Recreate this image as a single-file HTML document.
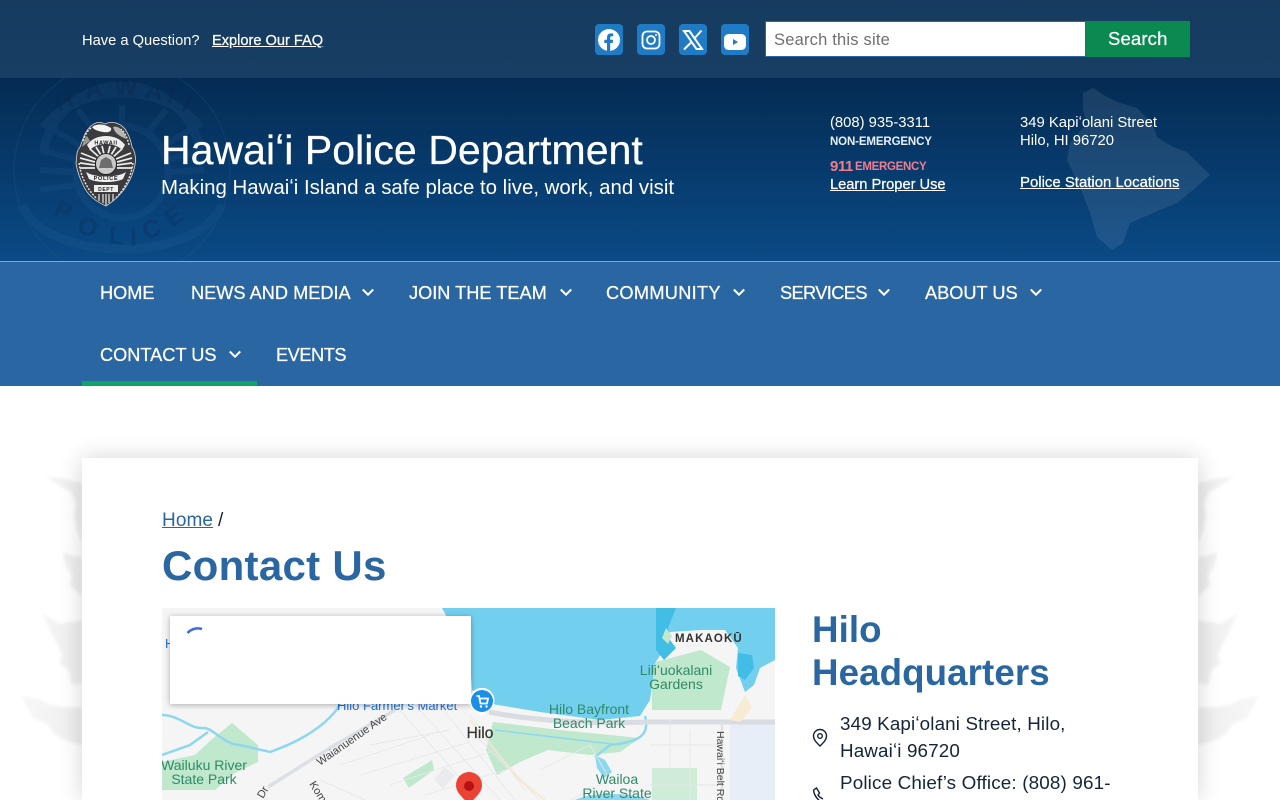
<!DOCTYPE html>
<html lang="en">
<head>
<meta charset="utf-8">
<title>Contact Us | Hawaiʻi Police Department</title>
<style>
html,body{margin:0;padding:0;width:1280px;height:800px;overflow:hidden;background:#fff;font-family:"Liberation Sans",sans-serif}
#page{position:relative;width:1280px;height:800px;overflow:hidden;background:#fff}
.a{position:absolute;white-space:nowrap;line-height:1}
svg{position:absolute;display:block}
#top{position:absolute;left:0;top:0;width:1280px;height:78px;background:linear-gradient(#163b5f,#173e64)}
#head{position:absolute;left:0;top:78px;width:1280px;height:183px;background:linear-gradient(#042b53,#0a4a86);overflow:hidden}
#nav{position:absolute;left:0;top:261px;width:1280px;height:125px;background:#2a66a1;border-top:1px solid #7fa8cf;box-sizing:border-box}
#u{position:absolute;left:82px;top:381px;width:175px;height:5px;background:#0ba568}
#card{position:absolute;left:82px;top:458px;width:1116px;height:342px;background:#fff;box-shadow:0 0 22px rgba(0,0,0,.17)}
.w{color:#fff}
.m{-webkit-text-stroke:.25px currentColor}
.n{color:#fff;font-size:18.2px;-webkit-text-stroke:.25px #fff}
a{color:inherit}
.s{position:absolute;top:24px;width:28px;height:31px;border-radius:4px;background:#1f7cc4}
.s svg{left:0;top:0}
.t{fill:#2f8a68;font-size:14px;font-family:"Liberation Sans",sans-serif}
</style>
</head>
<body>
<div id="page">

<svg style="left:0;top:450px" width="1280" height="350" viewBox="0 450 1280 350">
  <defs>
    <filter id="bl"><feGaussianBlur stdDeviation="1.5"/></filter>
    <linearGradient id="fg" gradientUnits="userSpaceOnUse" x1="20" y1="0" x2="82" y2="0"><stop offset="0" stop-color="#f8f8f8"/><stop offset="1" stop-color="#eeeeee"/></linearGradient>
  </defs>
  <g fill="url(#fg)" filter="url(#bl)">
    <path d="M45 477L63 478L82 483V543L77 532L74 515L76 505L72 493Z"/>
    <path d="M62 552L74 556L82 557V597L70 585L72 575L66 566Z"/>
    <path d="M42 613L60 624L82 620V683L72 685L68 670L60 664L62 654L56 642Z"/>
    <path d="M20 695L40 700L50 705L70 708L82 707V745L70 742L55 735L48 725L33 718Z"/>
    <g transform="translate(1280,0) scale(-1,1)">
      <path d="M45 477L63 478L82 483V543L77 532L74 515L76 505L72 493Z"/>
      <path d="M62 552L74 556L82 557V597L70 585L72 575L66 566Z"/>
      <path d="M42 613L60 624L82 620V683L72 685L68 670L60 664L62 654L56 642Z"/>
      <path d="M20 695L40 700L50 705L70 708L82 707V745L70 742L55 735L48 725L33 718Z"/>
    </g>
  </g>
</svg>

<div id="top"></div>
<span class="a w" style="left:82px;top:34px;font-size:14.7px">Have a Question?</span>
<a class="a w m" href="#" style="left:212px;top:34px;font-size:14.6px">Explore Our FAQ</a>

<div class="s" style="left:595px"><svg width="28" height="31" viewBox="0 0 28 31"><circle cx="14" cy="16" r="11" fill="#fff"/><path d="M12 27V19H9.300V15.800H12V13.500C12 10.800 13.600 9.400 16 9.400C17.100 9.400 18.200 9.600 18.200 9.600V12.300H16.900C15.600 12.300 15.200 13.100 15.200 13.900V15.800H18.100L17.600 19H15.200V27Z" fill="#1f7cc4"/></svg></div>
<div class="s" style="left:637px"><svg width="28" height="31" viewBox="0 0 28 31"><rect x="5.500" y="7.500" width="17" height="17" rx="4.500" fill="none" stroke="#fff" stroke-width="1.800"/><circle cx="14" cy="16" r="4" fill="none" stroke="#fff" stroke-width="1.800"/><circle cx="19" cy="11" r="1" fill="#fff"/></svg></div>
<div class="s" style="left:679px"><svg width="28" height="31" viewBox="0 0 28 31"><path d="M5 7H10.500L23 25H17.500Z" fill="none" stroke="#fff" stroke-width="2"/><path d="M22.500 6.500L15 15M13 17.500L5 25.500" fill="none" stroke="#fff" stroke-width="2"/></svg></div>
<div class="s" style="left:721px"><svg width="28" height="31" viewBox="0 0 28 31"><rect x="3" y="10" width="22" height="16" rx="4.500" fill="#fff"/><path d="M12 15V21L17 18Z" fill="#1f7cc4"/></svg></div>

<div style="position:absolute;left:765px;top:21px;width:321px;height:36px;background:#fff;border:1px solid #2a66a1;box-sizing:border-box"></div>
<span class="a" style="left:774px;top:32px;font-size:16.500px;color:#6f6f6f;letter-spacing:.2px">Search this site</span>
<div style="position:absolute;left:1086px;top:21px;width:104px;height:36px;background:#0a8a50"></div>
<span class="a w m" style="left:1108px;top:30px;font-size:18.500px;letter-spacing:.15px">Search</span>

<div id="head">
  <svg style="left:0;top:0" width="1280" height="183" viewBox="0 78 1280 183">
    <g fill="none" stroke="#3a6fa5" opacity=".13">
      <circle cx="122" cy="170" r="108" stroke-width="1.500"/>
      <path d="M44 148A80 80 0 0 1 200 148M44 128A86 60 0 0 1 200 128M22 205A102 55 0 0 0 222 205" stroke-width="9"/>
      <circle cx="122" cy="172" r="46" stroke-width="7"/>
      <path d="M40 150L78 160M40 170L75 172M40 190L75 185M50 128L85 148M78 110L98 135M122 105V130M166 110L146 135M194 128L159 148M204 150L166 160M204 170L169 172M204 190L169 185" stroke-width="6"/>
    </g>
    <g font-family="Liberation Sans,sans-serif" font-weight="bold" font-size="25" fill="#082a50" opacity=".45">
      <text x="58" y="112" transform="rotate(-20 58 112)">H</text>
      <text x="86" y="99" transform="rotate(-10 86 99)">A</text>
      <text x="114" y="95">W</text>
      <text x="144" y="98" transform="rotate(8 144 98)">A</text>
      <text x="166" y="102" transform="rotate(18 166 102)">I</text>
      <text x="180" y="110" transform="rotate(28 180 110)">I</text>
    </g>
    <g font-family="Liberation Sans,sans-serif" font-weight="bold" font-size="25" fill="#0a3463" opacity=".45">
      <text x="52" y="214" transform="rotate(28 52 214)">P</text>
      <text x="76" y="232" transform="rotate(18 76 232)">O</text>
      <text x="108" y="243" transform="rotate(6 108 243)">L</text>
      <text x="130" y="246">I</text>
      <text x="146" y="240" transform="rotate(-20 146 240)">C</text>
      <text x="172" y="228" transform="rotate(-35 172 228)">E</text>
    </g>
    <path d="M1083 93L1093 88L1107 97L1120 103L1137 108L1152 123L1157 137L1173 147L1187 152L1210 175L1193 190L1177 203L1153 213L1130 223L1123 243L1112 250L1097 237L1090 213L1080 187L1067 160L1070 143L1087 123L1083 110Z" fill="#fff" opacity=".085"/>
  </svg>
</div>

<svg style="left:75px;top:121px" width="62" height="86" viewBox="0 0 62 86">
  <path d="M31 85C24 82 14 76 9 66C5 58 2 50 1 42C2 36 1 30 5 26C8 18 10 10 16 5C22 0 26 1 30 3C36 0 44 1 50 8C54 14 56 20 57 26C61 32 61 38 60 44C58 54 54 62 48 70C42 77 36 82 31 85Z" fill="#3c3c3e" stroke="#d5d7da" stroke-width=".8"/>
  <path d="M17 6C22 2 30 3 36 7C37 10 34 12 28 11C23 10 19 9 17 6Z" fill="#f4f4f4"/>
  <path d="M38 6C44 4 50 11 51 18C45 15 40 13 38 6Z" fill="#b5b5b5"/>
  <path d="M12 15C9 18 8 22 7 26L15 20Z" fill="#999"/>
  <path d="M12 24C20 12 42 12 50 24L47 29C40 21 22 21 15 29Z" fill="#eee"/>
  <text x="31" y="23.500" font-size="5.500" font-weight="bold" text-anchor="middle" fill="#222" letter-spacing=".6">HAWAII</text>
  <g stroke="#ececec" stroke-width="1.700">
    <path d="M6 32L21 38M5 37L20 41M5 42L20 44M5 47L20 47M56 32L41 38M57 37L42 41M57 42L42 44M57 47L42 47M15 28L24 36M47 28L38 36M21 26L26 34M41 26L36 34M27 25L29 33M35 25L33 33"/>
  </g>
  <circle cx="31" cy="43" r="10.500" fill="#c9c9c9" stroke="#222" stroke-width="1"/>
  <path d="M24 47H38L36 39L31 36L26 39Z" fill="#6c6c6c"/>
  <path d="M11 51C20 57 42 57 51 51L48 58C40 62 22 62 14 58Z" fill="#eee"/>
  <text x="31" y="59" font-size="5.500" font-weight="bold" text-anchor="middle" fill="#222" letter-spacing=".7">POLICE</text>
  <rect x="19" y="64" width="24" height="7" fill="#eee"/>
  <text x="31" y="69.800" font-size="5" font-weight="bold" text-anchor="middle" fill="#222" letter-spacing=".6">DEPT</text>
  <g stroke="#ddd" stroke-width="1.300"><path d="M24 73V80M28 73V82M31 73V84M34 73V82M38 73V80"/></g>
  <g fill="none" stroke="#e2e2e2" stroke-width="1.500" stroke-dasharray="2 1.400"><path d="M4 42C6 56 12 68 22 78"/><path d="M58 42C56 56 50 68 40 78"/><path d="M8 20C10 14 12 10 16 7"/><path d="M54 24C52 16 50 12 46 8"/></g>
</svg>

<span class="a w m" style="left:161px;top:130px;font-size:41px;letter-spacing:.04px">Hawaiʻi Police Department</span>
<span class="a w" style="left:161px;top:178px;font-size:20.430px">Making Hawaiʻi Island a safe place to live, work, and visit</span>

<span class="a w" style="left:830px;top:116px;font-size:14.800px">(808) 935-3311</span>
<span class="a" style="left:830px;top:137px;font-size:11.500px;font-weight:bold;color:#e6f0fa;letter-spacing:-.13px">NON-EMERGENCY</span>
<span class="a" style="left:830px;top:159px;font-size:15px;font-weight:bold;color:#ef7e8e;letter-spacing:-.4px">911</span>
<span class="a" style="left:855px;top:162px;font-size:11.500px;font-weight:bold;color:#ef7e8e;letter-spacing:-.3px">EMERGENCY</span>
<a class="a w m" href="#" style="left:830px;top:178px;font-size:14.650px">Learn Proper Use</a>

<span class="a w" style="left:1020px;top:116px;font-size:14.850px">349 Kapiʻolani Street</span>
<span class="a w" style="left:1020px;top:134px;font-size:14.850px">Hilo, HI 96720</span>
<a class="a w m" href="#" style="left:1020px;top:176px;font-size:14.950px">Police Station Locations</a>

<div id="nav"></div>
<span class="a n" style="left:100px;top:284px">HOME</span>
<span class="a n" style="left:191px;top:284px">NEWS AND MEDIA</span>
<span class="a n" style="left:409px;top:284px">JOIN THE TEAM</span>
<span class="a n" style="left:606px;top:284px;letter-spacing:.3px">COMMUNITY</span>
<span class="a n" style="left:780px;top:284px;letter-spacing:-.6px">SERVICES</span>
<span class="a n" style="left:925px;top:284px">ABOUT US</span>
<span class="a n" style="left:100px;top:346px">CONTACT US</span>
<span class="a n" style="left:276px;top:346px;letter-spacing:-.45px">EVENTS</span>
<svg style="left:0;top:261px" width="1280" height="125" viewBox="0 261 1280 125" fill="none" stroke="#fff" stroke-width="2.100">
  <path d="M362.800 289.500L368 294.700L373.200 289.500M560.800 289.500L566 294.700L571.200 289.500M733.800 289.500L739 294.700L744.200 289.500M878.800 289.500L884 294.700L889.200 289.500M1030.800 289.500L1036 294.700L1041.200 289.500M229.800 351.500L235 356.700L240.200 351.500"/>
</svg>
<div id="u"></div>

<div id="card"></div>
<a class="a" href="#" style="left:162px;top:511px;font-size:19px;color:#2a66a1;letter-spacing:.1px">Home</a>
<span class="a" style="left:218px;top:511px;font-size:19px;color:#13233a">/</span>
<h1 class="a" style="margin:0;left:162px;top:545px;font-size:42px;font-weight:bold;color:#2a66a1;letter-spacing:.3px">Contact Us</h1>

<svg style="left:162px;top:608px" width="613" height="192" viewBox="162 608 613 192">
  <rect x="162" y="608" width="613" height="192" fill="#f5f5f5"/>
  <g fill="#bfe8cc">
    <path d="M211 740L232 723L258 745L258 762L235 773L215 790L162 790V762L195 755Z"/>
    <path d="M493 722L560 730L640 738L620 752L590 755L548 750L520 762L497 775L486 750Z"/>
    <path d="M652 663L701 650L730 667L721 710L652 710Z"/>
    <path d="M652 768L697 768V800H652Z" opacity=".7"/>
    <path d="M403 778L432 760L434 770L409 788Z"/>
  </g>
  <path d="M730 720H775V800H730Z" fill="#e8eef7"/>
  <path d="M442 608H775V660L760 668L754 685L745 692L736 668L738 648L725 630L700 630L670 632L664 650L655 663L650 700L640 716L600 720L540 712L492 704L472 690L470 660Z" fill="#72d0ee"/>
  <path d="M656 608H676L668 628L670 640L676 648L664 660L656 650Z" fill="#42bde6"/>
  <path d="M738 653L752 655L754 668L745 680L738 676Z" fill="#42bde6"/>
  <path d="M666 628L672 636L668 644L662 638Z" fill="#bfe8cc"/>
  <g fill="none" stroke="#8ed8ef" stroke-width="2.500">
    <path d="M162 715C180 715 190 730 205 728C215 730 225 745 240 745L270 752C290 745 310 735 325 722C332 715 338 710 340 703"/>
    <path d="M162 755L190 745L208 732"/>
    <path d="M645 716C650 735 640 742 610 745L595 757"/>
  </g>
  <path d="M595 755L605 760L612 772L604 778L597 768Z" fill="#8ed8ef"/>
  <path d="M575 800C590 792 630 792 650 800Z" fill="#8ed8ef"/>
  <path d="M495 730L620 745" stroke="#8ed8ef" stroke-width="1.500" fill="none"/>
  <g fill="none">
    <path d="M489 712C540 722 600 724 650 722H775" stroke="#d9dce0" stroke-width="5"/>
    <path d="M268 787L330 748L395 710" stroke="#dcdfe3" stroke-width="3.500"/>
    <path d="M722 722V800" stroke="#e0e2e6" stroke-width="2.500"/>
    <g stroke="#e6e8eb" stroke-width=".9">
      <path d="M395 705L480 800M420 710L500 800M445 712L515 800M370 745L450 730M340 765L430 735M360 775L470 742M390 785L490 752M425 795L505 770M470 730L540 800M320 780L365 800M540 770L590 745L610 780L570 800M650 745H720M650 785H722M690 730V800M670 720V770M470 715L525 790"/>
    </g>
  </g>
  <path d="M470 720L490 745L520 780L545 800" stroke="#f5e3c1" stroke-width="2.500" fill="none" opacity=".55"/>
  <path d="M434 779L445 767L455 775L443 789Z" fill="#e9ebee"/>
  <path d="M730 720L745 695L752 708L740 722Z" fill="#f8ebd4"/>

  <text x="165" y="648" font-size="13" fill="#1a73e8" font-family="Liberation Sans,sans-serif">H</text>
  <text x="337" y="710" font-size="13" fill="#1a73e8" font-family="Liberation Sans,sans-serif">Hilo Farmer's Market</text>

  <text x="675" y="642" font-size="11.500" font-weight="bold" letter-spacing="1.100" fill="#333" font-family="Liberation Sans,sans-serif">MAKAOKŪ</text>
  <text class="t" x="676" y="675" text-anchor="middle">Liliʻuokalani</text>
  <text class="t" x="676" y="689" text-anchor="middle">Gardens</text>
  <text class="t" x="589" y="714" text-anchor="middle">Hilo Bayfront</text>
  <text class="t" x="589" y="728" text-anchor="middle">Beach Park</text>
  <text class="t" x="204" y="770" text-anchor="middle">Wailuku River</text>
  <text class="t" x="204" y="784" text-anchor="middle">State Park</text>
  <text class="t" x="617" y="784" text-anchor="middle">Wailoa</text>
  <text class="t" x="617" y="798" text-anchor="middle">River State</text>
  <text x="480" y="738" font-size="15.500" text-anchor="middle" fill="#333" stroke="#333" stroke-width=".2" font-family="Liberation Sans,sans-serif">Hilo</text>
  <text x="320" y="766" font-size="11" fill="#444" transform="rotate(-35 320 766)" font-family="Liberation Sans,sans-serif">Waianuenue Ave</text>
  <text x="309" y="784" font-size="11" fill="#444" transform="rotate(58 309 784)" font-family="Liberation Sans,sans-serif">Komo</text>
  <text x="263" y="799" font-size="11" fill="#444" transform="rotate(-60 263 799)" font-family="Liberation Sans,sans-serif">Dr</text>
  <text x="717" y="731" font-size="10.500" fill="#444" transform="rotate(90 717 731)" font-family="Liberation Sans,sans-serif">Hawaiʻi Belt Rd</text>

  <path d="M469 806C464 797 456 794 456 785A13 13 0 0 1 482 785C482 794 474 797 469 806Z" fill="#ea4335"/>
  <circle cx="469" cy="786" r="5" fill="#b31412"/>

  <rect x="170" y="616" width="301" height="88" fill="#fff" style="filter:drop-shadow(0 1px 3px rgba(0,0,0,.3))"/>
  <path d="M187.500 633A14 14 0 0 1 202 629" fill="none" stroke="#4169e1" stroke-width="2.500"/>

  <path d="M482 716L473 709A12.500 12.500 0 1 1 491 709Z" fill="#fff"/>
  <circle cx="482" cy="701" r="11" fill="#1a8fe8"/>
  <path d="M476.500 696H479L480.500 703.500H487L488 698.500H479.500" fill="none" stroke="#fff" stroke-width="1.800"/>
  <circle cx="481" cy="706.500" r="1.200" fill="#fff"/><circle cx="486.500" cy="706.500" r="1.200" fill="#fff"/>
</svg>

<h2 class="a" style="margin:0;left:812px;top:612px;font-size:36.700px;font-weight:bold;color:#2a66a1;letter-spacing:.1px">Hilo</h2>
<h2 class="a" style="margin:0;left:812px;top:655px;font-size:36.700px;font-weight:bold;color:#2a66a1;letter-spacing:.1px">Headquarters</h2>

<span class="a" style="left:840px;top:715px;font-size:18.800px;color:#15243a;letter-spacing:.15px">349 Kapiʻolani Street, Hilo,</span>
<span class="a" style="left:840px;top:742px;font-size:18.800px;color:#15243a;letter-spacing:.15px">Hawaiʻi 96720</span>
<span class="a" style="left:840px;top:774px;font-size:18.850px;color:#15243a;letter-spacing:.15px">Police Chief’s Office: (808) 961-</span>
<svg style="left:812px;top:728px" width="16" height="20" viewBox="0 0 16 20" fill="none" stroke="#15243a" stroke-width="1.400">
  <path d="M8 18C5 15 1.500 12 1.500 8A6.500 6.500 0 0 1 14.500 8C14.500 12 11 15 8 18Z"/><circle cx="8" cy="8" r="2.300"/>
</svg>
<svg style="left:812px;top:787px" width="18" height="13" viewBox="0 0 18 13" fill="none" stroke="#15243a" stroke-width="1.400">
  <path d="M1.500 3L4.500 1L7.500 6L6 8C7 10 9 11 11 12"/>
  <path d="M1.500 3C2 8 5 12 9 15"/>
</svg>

</div>
</body>
</html>
